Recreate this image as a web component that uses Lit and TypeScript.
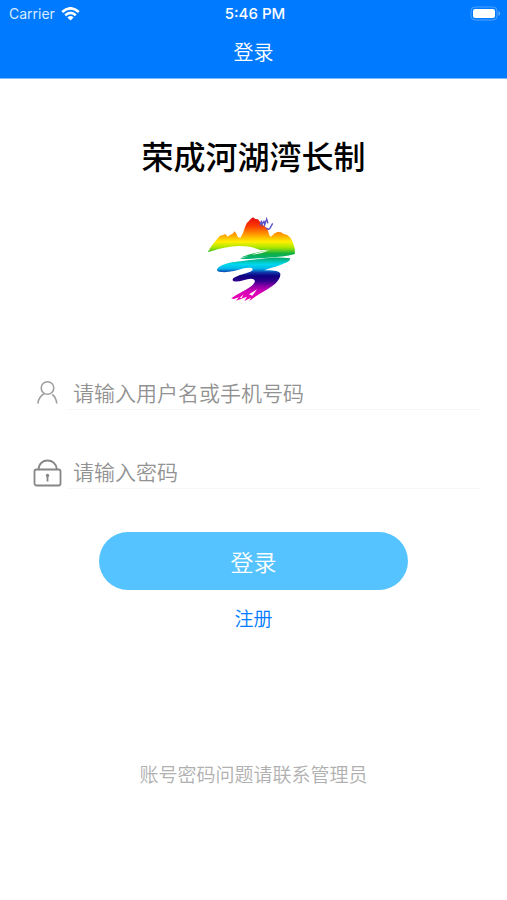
import { LitElement, html, css } from "lit";
import { customElement } from "lit/decorators.js";

@customElement("app-root")
export class AppRoot extends LitElement {
  static styles = css`
    :host {
      display: block;
      min-height: 100vh;
      background: #fff;
      color: #000;
      font-family: "Noto Sans CJK SC", sans-serif;
    }
    * {
      box-sizing: border-box;
    }
    svg {
      display: block;
      flex: none;
    }
    .top {
      background: #007aff;
      color: #fff;
      border-bottom: 1px solid #7dbbff;
    }
    .status {
      display: grid;
      grid-template-columns: 1fr auto 1fr;
      align-items: center;
      height: 27px;
      padding: 0 6px 0 9px;
      font-family: Inter, sans-serif;
      font-size: 14px;
    }
    .carrier {
      display: flex;
      align-items: center;
      gap: 6px;
      color: #d9ebff;
    }
    .time {
      font-size: 15px;
      font-weight: 500;
    }
    .battery {
      justify-self: end;
    }
    .nav {
      margin: 0;
      height: 51px;
      line-height: 50px;
      text-align: center;
      font-size: 20px;
      font-weight: 350;
    }
    .page {
      display: flex;
      flex-direction: column;
      align-items: center;
      padding: 52px 27px 40px;
    }
    .title {
      margin: 0 0 26px;
      font-size: 32px;
      line-height: 48px;
      font-weight: 500;
    }
    .form {
      display: flex;
      flex-direction: column;
      align-items: center;
      width: 100%;
      margin-top: 64px;
    }
    .field {
      display: flex;
      align-items: center;
      width: 100%;
      margin-bottom: 43px;
    }
    .icon {
      width: 40px;
      padding-left: 5px;
    }
    .input {
      flex: 1;
      min-width: 0;
      height: 36px;
      padding: 0 6px;
      border: 0;
      border-bottom: 1px solid #f7f7f7;
      outline: 0;
      background: none;
      color: #333;
      font: 350 21px/32px "Noto Sans CJK SC", sans-serif;
    }
    .input::placeholder {
      color: #929292;
      opacity: 1;
    }
    .submit {
      width: 68%;
      height: 58px;
      border: 0;
      border-radius: 29px;
      background: #55c3ff;
      color: #fff;
      font: 350 23px/32px "Noto Sans CJK SC", sans-serif;
    }
    .register {
      margin-top: 14px;
      color: #007aff;
      font-size: 19px;
      line-height: 28px;
      font-weight: 350;
      text-decoration: none;
    }
    .note {
      margin: 128px 0 0;
      color: #b0b0b0;
      font-size: 19px;
      line-height: 28px;
      font-weight: 350;
    }
  `;

  render() {
    return html`
      <header class="top">
        <div class="status">
          <span class="carrier">
            Carrier
            <svg width="19" height="14" viewBox="0 0 19 14" fill="none" stroke="#fff" stroke-width="2.6">
              <path d="M1.2 4.9Q9.5-2.3 17.8 4.9M4.2 8.2Q9.5 3.7 14.8 8.2" />
              <path d="M6.4 10.4Q9.5 7.8 12.6 10.4L9.5 13.6Z" fill="#fff" stroke="none" />
            </svg>
          </span>
          <span class="time">5:46 PM</span>
          <svg class="battery" width="31" height="15" viewBox="0 0 31 15">
            <rect x="1" y="1" width="26" height="13" rx="4" fill="none" stroke="#4da2ff" />
            <rect x="3" y="3" width="22" height="9" rx="2" fill="#fff" />
            <path d="M28.5 5Q32 7.5 28.5 10Z" fill="#66afff" />
          </svg>
        </div>
        <h1 class="nav">登录</h1>
      </header>
      <main class="page">
        <h2 class="title">荣成河湖湾长制</h2>
        <svg width="110" height="105" viewBox="0 0 330 315" role="img" aria-label="荣成河湖湾长制">
          <defs>
            <linearGradient id="rainbow" gradientUnits="userSpaceOnUse" x1="0" y1="38" x2="0" y2="288">
              <stop offset="0" stop-color="#e80c10" />
              <stop offset=".1" stop-color="#fa3a00" />
              <stop offset=".2" stop-color="#ff9a00" />
              <stop offset=".29" stop-color="#fff000" />
              <stop offset=".36" stop-color="#a8e600" />
              <stop offset=".43" stop-color="#12b040" />
              <stop offset=".49" stop-color="#00b078" />
              <stop offset=".56" stop-color="#00d8ee" />
              <stop offset=".61" stop-color="#00b8ea" />
              <stop offset=".66" stop-color="#1030a8" />
              <stop offset=".7" stop-color="#0c0080" />
              <stop offset=".76" stop-color="#30008c" />
              <stop offset=".82" stop-color="#8c00a8" />
              <stop offset=".89" stop-color="#d800b8" />
              <stop offset="1" stop-color="#f000b0" />
            </linearGradient>
          </defs>
          <g fill="url(#rainbow)">
            <path
              d="M26 142C34 124 50 108 62 93L72 90 80 87 85 95 93 90 101 86 107 79 113 88 117 97 124 98 132 84 138 66 143 55 149 49 155 42 162 37 169 42 177 43 185 53 196 64 205 70 208 80 211 91 216 95 225 86 235 81 246 82 254 87 264 89 275 99 282 113 287 130 288 146C270 154 236 156 205 158C175 160 150 162 122 162L150 153 126 158C146 147 180 142 210 134L184 136C160 124 126 121 94 125C70 128 46 135 26 142Z"
            />
            <path
              d="M54 193C58 184 78 176 100 172C130 167 150 165 185 162C215 158 246 156 273 160C276 166 262 173 246 179C226 187 208 190 196 196C216 196 240 196 244 206C245 220 234 233 220 243C200 257 178 267 151 288L156 278 136 288 144 275 111 287 120 277 104 282 97 280C116 266 150 252 163 238C171 228 168 221 156 221C140 222 120 232 105 229C96 225 102 218 116 213C134 206 152 204 160 196C165 188 150 187 134 190C112 197 88 203 66 201C56 200 53 197 54 193Z"
            />
          </g>
          <path
            d="M158 149Q182 140 213 135Q190 146 158 149ZM150 268L174 253 160 272ZM122 279L134 268 128 279Z"
            fill="#fff"
          />
          <path
            d="M183 61Q188 43 188 51L190 64M194 47L197 60 203 42 207 55M187 56L198 50M202 69Q209 77 214 68L221 55"
            fill="none"
            stroke="#5a50c8"
            stroke-width="4"
          />
        </svg>
        <form class="form" @submit=${(e: Event) => e.preventDefault()}>
          <div class="field">
            <label class="icon" for="user" aria-label="用户名或手机号码">
              <svg width="32" height="32" viewBox="0 0 32 32" fill="none" stroke="#a0a0a0" stroke-width="1.6">
                <circle cx="15.5" cy="12" r="6.3" />
                <path d="M5.8 27.5Q7 20.5 12 17.8M20.2 18.5Q24 21 24.8 27.5" />
              </svg>
            </label>
            <input class="input" id="user" type="text" placeholder="请输入用户名或手机号码" />
          </div>
          <div class="field">
            <label class="icon" for="password" aria-label="密码">
              <svg width="32" height="32" viewBox="0 0 32 32" fill="none" stroke="#868686" stroke-width="1.8">
                <rect x="2.5" y="14.5" width="26" height="16" rx="2" />
                <path d="M6.5 14.500C7 2.500 24 2.500 25 14.500M15.500 20V26.500" />
                <circle cx="15.5" cy="20.5" r="1.700" fill="#868686" stroke="none" />
              </svg>
            </label>
            <input class="input" id="password" type="password" placeholder="请输入密码" />
          </div>
          <button class="submit" type="submit">登录</button>
        </form>
        <a class="register" href="#register">注册</a>
        <p class="note">账号密码问题请联系管理员</p>
      </main>
    `;
  }
}
